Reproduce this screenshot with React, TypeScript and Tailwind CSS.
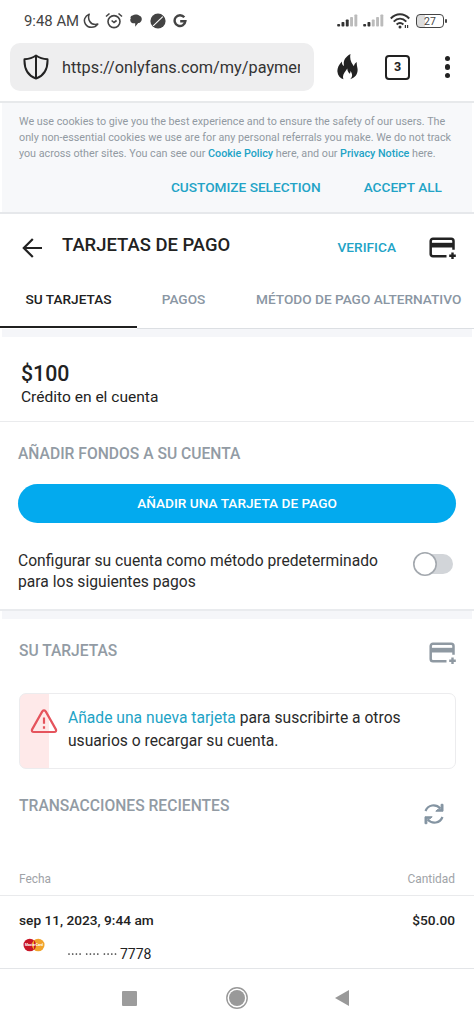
import React from "react";

function CardPlusIcon({ className }: { className: string }) {
  return (
    <svg viewBox="0 0 28 24" className={className} fill="none">
      <path d="M17.500 19.200H4a2.300 2.300 0 0 1-2.300-2.300V4.100A2.300 2.300 0 0 1 4 1.800h18.200a2.300 2.300 0 0 1 2.300 2.300v8.700" stroke="currentColor" strokeWidth="2.500" />
      <path d="M1 5.800h24v4.700H1z" fill="currentColor" />
      <path d="M23.500 15.500v6.600M20.200 18.800h6.600" stroke="currentColor" strokeWidth="2.400" />
    </svg>
  );
}

function SignalIcon({ strong }: { strong: number }) {
  return (
    <svg viewBox="0 0 21 14" className="h-3.5 w-[21px]">
      {[0, 1, 2, 3, 4].map((i) => (
        <rect key={i} x={i * 4.3 + 0.2} y={[10, 8, 5.5, 3, 0.5][i]} width="2.9" height={[2.5, 4.5, 7, 9.5, 12][i]} rx="0.8" fill={i < strong ? "#333" : "#bbb"} />
      ))}
    </svg>
  );
}

function StatusBar() {
  return (
    <div className="flex h-[43px] items-center pb-px pl-6 pr-[27px] text-[#444]">
      <span className="w-[59px] whitespace-nowrap text-[14.9px]">9:48 AM</span>
      <svg viewBox="0 0 16 16" className="h-4 w-4" fill="none" stroke="#444" strokeWidth="1.5" strokeLinejoin="round">
        <path d="M6.2 1.2C1.7 3 .2 7.400 2.400 11c2.500 4.300 9.300 4.600 12.400.1-3.500.8-6.500-.1-8-2.600C5.300 6 5.200 3.600 6.200 1.200Z" />
      </svg>
      <svg viewBox="0 0 18 18" className="ml-1.5 h-[18px] w-[18px]" fill="none" stroke="#444" strokeWidth="1.6">
        <circle cx="9" cy="9.600" r="6" />
        <path d="M1 4.500 4.500 1.500M17 4.500l-3.500-3M6.600 8.500 9 10.500l2.600-2" />
      </svg>
      <svg viewBox="0 0 14 14" className="ml-[6px] h-3.5 w-3.5" fill="#444">
        <path d="M3.500 1.400C6-.1 9 .6 10.500 1.800c3 .5 3.200 6-.3 7.200H9.200l-3 3.700V9.200H3.700C1.400 8.700.5 5.500 1.900 4.600.9 3.500 1.800 1.700 3.500 1.400Z" />
      </svg>
      <svg viewBox="0 0 16 16" className="ml-[7px] h-4 w-4">
        <circle cx="8" cy="8" r="7.600" fill="#444" />
        <path d="m3.200 12.800 9.600-9.100" stroke="white" strokeWidth="1.100" />
        <path d="m12.600 1.200 2 2" stroke="white" strokeWidth="1" />
      </svg>
      <svg viewBox="0 0 14 14" className="ml-[7px] h-3.5 w-3.5" fill="none" stroke="#444" strokeWidth="2.400">
        <path d="M11.300 3.300A5.400 5.400 0 1 0 12.400 7.200H7.200" />
      </svg>
      <div className="ml-auto flex items-center">
        <SignalIcon strong={3} />
        <span className="w-[5px]" />
        <SignalIcon strong={2} />
        <svg viewBox="0 0 20 16" className="ml-1.5 h-4 w-5" fill="none" stroke="#333" strokeWidth="1.900">
          <path d="M.8 5.500C6-.2 14-.2 19.200 5.500M3.700 8.600c3.800-4 8.800-4 12.600 0M6.600 11.500c2.200-2 4.600-2 6.800 0" />
          <circle cx="10" cy="14" r="1.500" fill="#333" stroke="none" />
          <path d="M15.400 12v3M17.600 12v3" strokeWidth="1.200" />
        </svg>
        <div className="ml-[6px] flex h-[14px] w-[28px] items-center justify-center rounded-[4px] border-[1.5px] border-[#444] bg-[linear-gradient(90deg,#ddd_30%,#fff_30%)] pt-px text-[10.500px] leading-[11px]">27</div>
        <span className="ml-px h-1 w-0.5 rounded-sm bg-[#444]" />
      </div>
    </div>
  );
}

function AddressBar() {
  return (
    <div className="flex h-[60px] items-start border-b-[2px] border-[#e7e9eb] pl-2.5">
      <div className="flex h-12 w-[304px] items-center rounded-[10px] bg-[#eeeeef] pl-[13px]">
        <svg viewBox="0 0 26 26" className="h-[26px] w-[26px]" fill="none" stroke="#222" strokeWidth="2" strokeLinejoin="round">
          <path d="M13 1.500C9.500 4 5.500 5 1.500 5.200c-.4 9 2 15.800 11.500 19.400 9.500-3.600 11.900-10.400 11.500-19.400C20.500 5 16.500 4 13 1.500ZM13 2v22.500" />
        </svg>
        <div className="ml-[13px] mt-[3px] w-[238px] overflow-hidden whitespace-nowrap text-[16.300px] text-[#333]">https://onlyfans.com/my/paymen</div>
      </div>
      <svg viewBox="0 0 21 26" className="ml-[23px] mt-[11px] h-[26px] w-[21px]" fill="#222">
        <path d="M13.500 0C7 3.500 6.200 8 7 12 5.300 11 4.900 9.500 4.900 7.500 1.500 11 .2 14.500.4 17.400.7 21.300 3 24 6.500 25.300c-1.700-4.500 1.200-6.700 3.800-10.800 0 2.500 1.100 3.900 2.500 5.200.5-1 .7-1.800.6-2.800 2.300 3 2.300 6-.2 8.400 5.600-1.600 8.200-6.300 7.200-11.300-.4-2.100-.9-3.800-.6-6.100-2 1.300-2.700 2.600-2.900 4.400C14.700 9 12.300 6 13.500 0Z" />
      </svg>
      <div className="ml-[27px] mt-3 flex h-[25px] w-[25px] items-center justify-center rounded-[4px] border-2 border-[#222] text-[12.500px] font-bold text-[#222]">3</div>
      <div className="ml-[35px] mt-[13px] flex flex-col gap-[3px]">
        <span className="h-[5.400px] w-[5.400px] rounded-full bg-[#222]" />
        <span className="h-[5.400px] w-[5.400px] rounded-full bg-[#222]" />
        <span className="h-[5.400px] w-[5.400px] rounded-full bg-[#222]" />
      </div>
    </div>
  );
}

function CookieNotice() {
  return (
    <div className="h-[111px] border-b-2 border-[#e6e8eb] px-0.5">
      <div className="h-full bg-[#f7f8fa] pl-[17px] pt-[11px] text-[10.780px] leading-[15.800px] text-[#929aa2]">
        <div className="whitespace-nowrap">We use cookies to give you the best experience and to ensure the safety of our users. The</div>
        <div className="whitespace-nowrap">only non-essential cookies we use are for any personal referrals you make. We do not track</div>
        <div className="whitespace-nowrap tracking-[-0.02px]">
          you across other sites. You can see our <span className="font-medium text-[#22a3c6]">Cookie Policy</span> here, and our <span className="font-medium text-[#22a3c6]">Privacy Notice</span> here.
        </div>
        <div className="mt-4 flex justify-end gap-[43px] whitespace-nowrap pr-[30px] text-[13.650px] font-medium leading-5 text-[#22a3c6]">
          <span>CUSTOMIZE SELECTION</span>
          <span>ACCEPT ALL</span>
        </div>
      </div>
    </div>
  );
}

function PageHeader() {
  return (
    <>
      <div className="flex h-[64px] items-center pl-[22px] pr-[17px]">
        <svg viewBox="0 0 20 20" className="mt-[4px] h-5 w-5" fill="none" stroke="#222" strokeWidth="2.200">
          <path d="M20 10H2M10.800 1 1.800 10l9 9" />
        </svg>
        <h1 className="-mt-px ml-5 whitespace-nowrap text-[18.450px] font-medium text-[#222]">TARJETAS DE PAGO</h1>
        <span className="ml-auto mt-0.5 text-[13.700px] font-medium text-[#22a3c6]">VERIFICA</span>
        <CardPlusIcon className="ml-[33px] mt-[5px] h-6 w-7 text-[#222]" />
      </div>
      <div className="flex h-[51px] whitespace-nowrap text-[13.650px] font-medium leading-[43px] text-[#8a96a3]">
        <div className="h-[50px] w-[137px] border-b-2 border-[#202020] text-center text-[#202020]">SU TARJETAS</div>
        <div className="w-[93px] border-b border-[#dcdfe3] text-center">PAGOS</div>
        <div className="flex-1 border-b border-[#dcdfe3] pl-[26px]">MÉTODO DE PAGO ALTERNATIVO</div>
      </div>
      <div className="mx-0.5 h-2 bg-[#f5f6f9]" />
    </>
  );
}

function Funds() {
  return (
    <>
      <div className="h-[85px] border-b border-[#eaebed] pl-[21px] pt-[25px] text-[#222]">
        <div className="text-[21.300px] font-medium leading-6">$100</div>
        <div className="-mt-px text-[15.550px] leading-6">Crédito en el cuenta</div>
      </div>
      <div className="h-[189px] border-b-2 border-[#e9ebee] px-[18px] pt-[21px]">
        <h2 className="text-[15.650px] font-medium leading-[22px] text-[#929ba4]">AÑADIR FONDOS A SU CUENTA</h2>
        <button className="mt-[19px] flex h-[39px] w-[438px] items-center justify-center rounded-full bg-[#03aaee] text-[13.650px] font-medium text-white">AÑADIR UNA TARJETA DE PAGO</button>
        <div className="mt-[27px] flex justify-between pr-[3px]">
          <div className="whitespace-nowrap text-[15.650px] leading-[21px] text-[#2a2a2a]">
            Configurar su cuenta como método predeterminado
            <br />
            para los siguientes pagos
          </div>
          <svg viewBox="0 0 40 24" className="mt-0.5 h-6 w-10">
            <rect x="8" y="2" width="32" height="20" rx="10" fill="#d2d5d9" />
            <circle cx="12" cy="12" r="11.200" fill="white" stroke="#a3a8ae" strokeWidth="1.600" />
          </svg>
        </div>
      </div>
      <div className="mx-0.5 h-2 bg-[#f5f6f9]" />
    </>
  );
}

function Cards() {
  return (
    <div className="h-[174px] pl-[19px] pr-[17px] pt-5">
      <div className="flex h-[54px] justify-between">
        <h2 className="mt-px text-[15.600px] font-medium leading-[22px] text-[#929ba4]">SU TARJETAS</h2>
        <CardPlusIcon className="mt-[3px] h-6 w-7 text-[#8f99a2]" />
      </div>
      <div className="flex h-[76px] w-[437px] overflow-hidden rounded-[7px] border-[1.500px] border-[#ececee] bg-[linear-gradient(90deg,#fee9e9_29px,#fff_29px)] pl-[10px] pt-3">
        <svg viewBox="0 0 28 25" className="mt-[3px] h-[25px] w-7" fill="none" stroke="#e5545d" strokeWidth="2.200" strokeLinejoin="round">
          <path d="M12.300 2.400 2 20.600Q1.300 23 3.800 23h20.400q2.500 0 1.800-2.400L15.700 2.400Q14 .4 12.300 2.400Z" />
          <path d="M14 8.500v6.300M14 17.300v2.500" />
        </svg>
        <p className="ml-[10px] whitespace-nowrap text-[15.650px] leading-[23px] text-[#2a2a2a]">
          <span className="text-[#22a3c6]">Añade una nueva tarjeta</span> para suscribirte a otros
          <br />
          usuarios o recargar su cuenta.
        </p>
      </div>
    </div>
  );
}

function Transactions() {
  return (
    <>
      <div className="flex h-[75px] justify-between pl-[19px] pr-[29px]">
        <h2 className="mt-px text-[15.650px] font-medium leading-[24px] text-[#929ba4]">TRANSACCIONES RECIENTES</h2>
        <svg viewBox="0 0 22 22" className="mt-[10px] h-[22px] w-[22px]" fill="none" stroke="#8494a2" strokeWidth="2.200">
          <path d="M2.500 8C5 1.800 12.500 .4 17.500 5.500M19.500 14C17 20.200 9.500 21.600 4.500 16.500" />
          <path d="M20 1.300v6.900h-7.200l2.300-2h3v-4.900ZM2 20.700v-6.900h7.200l-2.300 2h-3v4.900Z" fill="#8494a2" strokeWidth="1" />
        </svg>
      </div>
      <div className="flex h-[28px] justify-between border-b-[1.500px] border-[#e9eaec] pl-[19px] pr-[19px] text-[11.900px] leading-[23px] text-[#a0a3a7]">
        <span>Fecha</span>
        <span>Cantidad</span>
      </div>
      <div className="h-[73px] border-b border-[#e3e5e8] pl-[19px] pr-[19px] pt-[14px] text-[#222]">
        <div className="flex justify-between text-[13.700px] font-medium leading-5">
          <span>sep 11, 2023, 9:44 am</span>
          <span>$50.00</span>
        </div>
        <div className="flex pl-1">
          <svg viewBox="0 0 22 14" className="mt-[8px] h-3.5 w-[22px]">
            <circle cx="6.800" cy="7" r="6.300" fill="#c81627" />
            <circle cx="15.200" cy="7" r="6.300" fill="#f1a32b" />
            <path d="M11 2.300a6.300 6.300 0 0 1 0 9.400Z" fill="#c81627" />
            <text x="11" y="8.400" textAnchor="middle" textLength="18" lengthAdjust="spacingAndGlyphs" fontFamily="Roboto, sans-serif" fontSize="4" fontWeight="bold" fill="white">MasterCard</text>
          </svg>
          <svg viewBox="0 0 50 4" className="ml-[23px] mt-[22px] h-1 w-[50px]" fill="#333">
            {[0, 1, 2].map((g) => [0, 1, 2, 3].map((d) => <circle key={`${g}-${d}`} cx={1 + g * 17.7 + d * 3.7} cy="2" r="0.850" />))}
          </svg>
          <span className="ml-[2px] mt-[14px] text-[14px] leading-5">7778</span>
        </div>
      </div>
    </>
  );
}

function NavigationBar() {
  return (
    <div className="flex h-[57px] items-center pl-[122px] pt-px">
      <span className="h-[15px] w-[15px] rounded-[1px] bg-[#9c9c9c]" />
      <svg viewBox="0 0 22 22" className="ml-[89px] h-[22px] w-[22px]">
        <circle cx="11" cy="11" r="10.200" fill="none" stroke="#999" strokeWidth="1.400" />
        <circle cx="11" cy="11" r="8" fill="#999" />
      </svg>
      <svg viewBox="0 0 14 16" className="ml-[87px] h-4 w-3.5" fill="#999">
        <path d="M14 0v16L0 8Z" />
      </svg>
    </div>
  );
}

export default function App() {
  return (
    <main className="h-[1026px] w-[474px] overflow-hidden bg-white font-['Roboto',sans-serif]">
      <StatusBar />
      <AddressBar />
      <CookieNotice />
      <PageHeader />
      <Funds />
      <Cards />
      <Transactions />
      <NavigationBar />
    </main>
  );
}
